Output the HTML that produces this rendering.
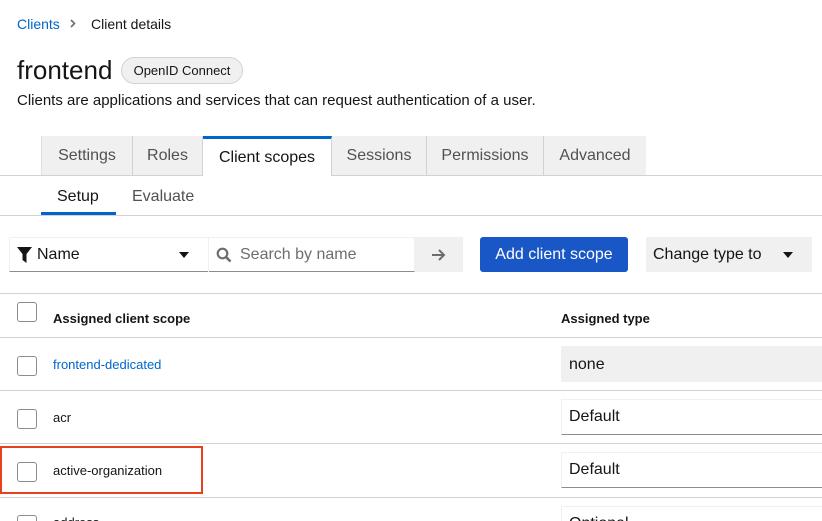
<!DOCTYPE html>
<html><head><style>
*{box-sizing:border-box;margin:0;padding:0}
html,body{width:822px;height:521px;overflow:hidden}
body{background:#fff;font-family:"Liberation Sans",sans-serif;color:#151515;position:relative}
.a{position:absolute;white-space:nowrap}
.tab{position:absolute;top:136px;height:39px;background:#f0f0f0;border-right:1px solid #d2d2d2;font-size:16px;color:#4f5255;line-height:40px;text-align:center}
.cb{position:absolute;left:17px;width:20px;height:20px;border:1px solid #8a8d90;border-radius:3px;background:#fff}
.hl{position:absolute;left:0;width:822px;height:1px;background:#d2d2d2}
.sel{position:absolute;left:561px;width:270px;height:36px;border:1px solid #f0f0f0;border-bottom:1px solid #8a8d90;font-size:16px;line-height:34px;padding-left:7px}
</style></head><body>
<div class="a" style="left:17px;top:16px;font-size:14px;color:#0066cc">Clients</div>
<svg class="a" style="left:70px;top:19px" width="6" height="9" viewBox="0 0 6 9"><path d="M1 1l3.5 3.5L1 8" fill="none" stroke="#6a6e73" stroke-width="1.6"/></svg>
<div class="a" style="left:91px;top:16px;font-size:14px">Client details</div>
<div class="a" style="left:17px;top:55px;font-size:26px;font-weight:500">frontend</div>
<div class="a" style="left:121px;top:57px;width:122px;height:27px;border:1px solid #d2d2d2;border-radius:14px;background:#f0f0f0;font-size:13px;line-height:25px;text-align:center">OpenID Connect</div>
<div class="a" style="left:17px;top:92px;font-size:15px">Clients are applications and services that can request authentication of a user.</div>

<div class="hl" style="top:175px"></div>
<div class="tab" style="left:41px;width:92px;border-left:1px solid #e0e0e0">Settings</div>
<div class="tab" style="left:133px;width:70px">Roles</div>
<div class="tab" style="left:203px;width:129px;background:#fff;color:#151515;border-top:3px solid #0066cc;height:40px;line-height:37px;border-right:1px solid #d2d2d2">Client scopes</div>
<div class="tab" style="left:332px;width:95px">Sessions</div>
<div class="tab" style="left:427px;width:117px">Permissions</div>
<div class="tab" style="left:544px;width:102px;border-right:none">Advanced</div>

<div class="a" style="left:57px;top:188px;font-size:16px">Setup</div>
<div class="a" style="left:132px;top:188px;font-size:16px;color:#4f5255">Evaluate</div>
<div class="hl" style="top:215px"></div>
<div class="a" style="left:41px;top:212px;width:75px;height:3px;background:#0066cc"></div>

<div class="a" style="left:9px;top:237px;width:406px;height:35px;border:1px solid #f0f0f0;border-bottom:1px solid #8a8d90"></div>
<div class="a" style="left:208px;top:237px;width:1px;height:35px;background:#f0f0f0"></div>
<svg class="a" style="left:17px;top:247px" width="16" height="16" viewBox="0 0 16 16"><path d="M0 0h15l-5.5 7v9l-4-3V7z" fill="#151515"/></svg>
<div class="a" style="left:37px;top:246px;font-size:16px">Name</div>
<svg class="a" style="left:179px;top:252px" width="10" height="6"><path d="M0 0h10L5 6z" fill="#151515"/></svg>
<svg class="a" style="left:216px;top:247px" width="16" height="16" viewBox="0 0 16 16"><circle cx="6.5" cy="6.5" r="4.8" fill="none" stroke="#6a6e73" stroke-width="2.2"/><path d="M10 10l4.5 4.5" stroke="#6a6e73" stroke-width="2.6"/></svg>
<div class="a" style="left:240px;top:246px;font-size:16px;color:#6a6e73">Search by name</div>
<div class="a" style="left:415px;top:237px;width:48px;height:35px;background:#f0f0f0"></div>
<svg class="a" style="left:431px;top:248px" width="15" height="14" viewBox="0 0 15 14"><path d="M1 7h12M8 2l5 5-5 5" fill="none" stroke="#6a6e73" stroke-width="2"/></svg>
<div class="a" style="left:480px;top:237px;width:148px;height:35px;border-radius:3px;color:#fff;font-size:16px;line-height:36px;text-align:center;background:#1a57c6">Add client scope</div>
<div class="a" style="left:646px;top:237px;width:166px;height:35px;background:#f0f0f0;font-size:16px;line-height:36px;padding-left:7px">Change type to</div>
<svg class="a" style="left:783px;top:252px" width="10" height="6"><path d="M0 0h10L5 6z" fill="#151515"/></svg>

<div class="hl" style="top:293px"></div>
<div class="cb" style="top:302px"></div>
<div class="a" style="left:53px;top:311px;font-size:13px;font-weight:bold">Assigned client scope</div>
<div class="a" style="left:561px;top:311px;font-size:13px;font-weight:bold">Assigned type</div>
<div class="hl" style="top:337px"></div>
<div class="cb" style="top:356px"></div>
<div class="a" style="left:53px;top:357px;font-size:13px;color:#0066cc">frontend-dedicated</div>
<div class="a" style="left:561px;top:346px;width:270px;height:36px;background:#f0f0f0;font-size:16px;line-height:37px;padding-left:8px">none</div>
<div class="hl" style="top:390px"></div>
<div class="cb" style="top:409px"></div>
<div class="a" style="left:53px;top:410px;font-size:13px">acr</div>
<div class="sel" style="top:399px">Default</div>
<div class="hl" style="top:443px"></div>
<div class="cb" style="top:462px"></div>
<div class="a" style="left:53px;top:463px;font-size:13px">active-organization</div>
<div class="sel" style="top:452px">Default</div>
<div class="a" style="left:0;top:446px;width:203px;height:48px;border:2px solid #e8401c"></div>
<div class="hl" style="top:497px"></div>
<div class="cb" style="top:515px"></div>
<div class="a" style="left:53px;top:515px;font-size:13px">address</div>
<div class="sel" style="top:506px">Optional</div>
</body></html>
